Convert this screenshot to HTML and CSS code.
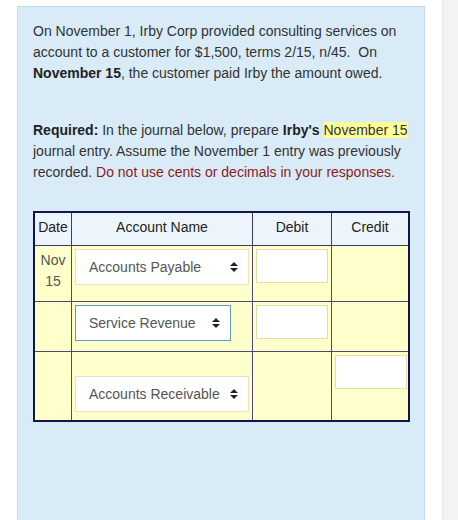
FILE: index.html
```html
<!DOCTYPE html>
<html lang="en">
  <head>
    <meta charset="UTF-8" />
    <title>Journal Entry</title>
    <link rel="stylesheet" href="styles.css">
  </head>
  <body>
    <div class="page">
      <div class="question">
        <p class="intro">
          On November 1, Irby Corp provided consulting services on account to a customer for $1,500, terms 2/15, n/45.&nbsp; On
          <b>November 15</b>, the customer paid Irby the amount owed.
        </p>
        <p class="required">
          <b>Required:</b> In the journal below, prepare <b>Irby's</b> <span class="mark">November 15</span>
          journal entry. Assume the November 1 entry was previously recorded.
          <span class="warn">Do not use cents or decimals in your responses.</span>
        </p>
        <table class="journal">
          <thead>
            <tr>
              <th class="col-date">Date</th>
              <th class="col-account">Account Name</th>
              <th class="col-debit">Debit</th>
              <th class="col-credit">Credit</th>
            </tr>
          </thead>
          <tbody>
            <tr class="row-first">
              <td class="date">Nov<br>15</td>
              <td>
                <div class="select wide">
                  <span>Accounts Payable</span>
                  <span class="arrows"></span>
                </div>
              </td>
              <td><div class="amount"></div></td>
              <td></td>
            </tr>
            <tr class="row-second">
              <td></td>
              <td>
                <div class="select focused">
                  <span>Service Revenue</span>
                  <span class="arrows"></span>
                </div>
              </td>
              <td><div class="amount"></div></td>
              <td></td>
            </tr>
            <tr class="row-third">
              <td></td>
              <td class="low">
                <div class="select wide">
                  <span>Accounts Receivable</span>
                  <span class="arrows"></span>
                </div>
              </td>
              <td></td>
              <td><div class="amount"></div></td>
            </tr>
          </tbody>
        </table>
      </div>
      <div class="rail"></div>
    </div>
  </body>
</html>
```

FILE: styles.css
```css
html,
body {
  margin: 0;
  padding: 0;
  background-color: #ffffff;
  font-family: "Liberation Sans", Arial, sans-serif;
  color: #333333;
}
.page {
  display: flex;
  height: 520px;
  overflow: hidden;
}
.question {
  margin: 6px 0 0 17px;
  width: 380px;
  padding: 14px 11px 0 15px;
  background-color: #d8ebf6;
  border: 1px solid #c3dcee;
  border-bottom: none;
  font-size: 14px;
  line-height: 21px;
}
.rail {
  margin-left: 17px;
  flex: 1;
  background-color: #f3f3f3;
  border-left: 1px solid #e8e8e8;
}
p {
  margin: 0;
}
.intro {
  margin-bottom: 36px;
}
b {
  color: #222222;
}
.mark {
  background-color: #ffff99;
}
.warn {
  color: #8e1b1b;
}
.journal {
  margin-top: 28px;
  width: 377px;
  border-collapse: collapse;
  border: 2px solid #14144a;
  font-size: 14px;
  table-layout: fixed;
}
.journal th {
  height: 28px;
  background-color: #edf5fc;
  border: 1px solid #3c3c66;
  font-weight: normal;
  color: #222222;
  padding: 0 0 4px 0;
}
.col-date {
  width: 36px;
}
.col-account {
  width: 180px;
}
.col-debit {
  width: 78px;
}
.journal td {
  background-color: #ffffcc;
  border: 1px solid #4a4a70;
  vertical-align: top;
  padding: 3px 3px;
}
.row-first td {
  height: 48px;
}
.row-second td {
  height: 43px;
}
.journal td.low {
  padding-top: 24px;
  padding-bottom: 8px;
}
.date {
  text-align: center;
  color: #555555;
  line-height: 21px;
}
.journal td.date {
  padding-top: 4px;
}
.select {
  box-sizing: border-box;
  display: flex;
  align-items: center;
  justify-content: space-between;
  height: 36px;
  padding: 0 10px 0 13px;
  background-color: #ffffff;
  border: 1px solid #e6e3c4;
  color: #555555;
}
.select.wide {
  width: 174px;
}
.select.focused {
  width: 156px;
  border-color: #5fa0b8;
}
.arrows {
  position: relative;
  width: 8px;
  height: 10px;
}
.arrows::before,
.arrows::after {
  content: "";
  position: absolute;
  left: 0;
  border-left: 4px solid transparent;
  border-right: 4px solid transparent;
}
.arrows::before {
  top: 0;
  border-bottom: 4px solid #222222;
}
.arrows::after {
  bottom: 0;
  border-top: 4px solid #222222;
}
.amount {
  box-sizing: border-box;
  width: 72px;
  height: 34px;
  background-color: #ffffff;
  border: 1px solid #e2deaa;
}
```
